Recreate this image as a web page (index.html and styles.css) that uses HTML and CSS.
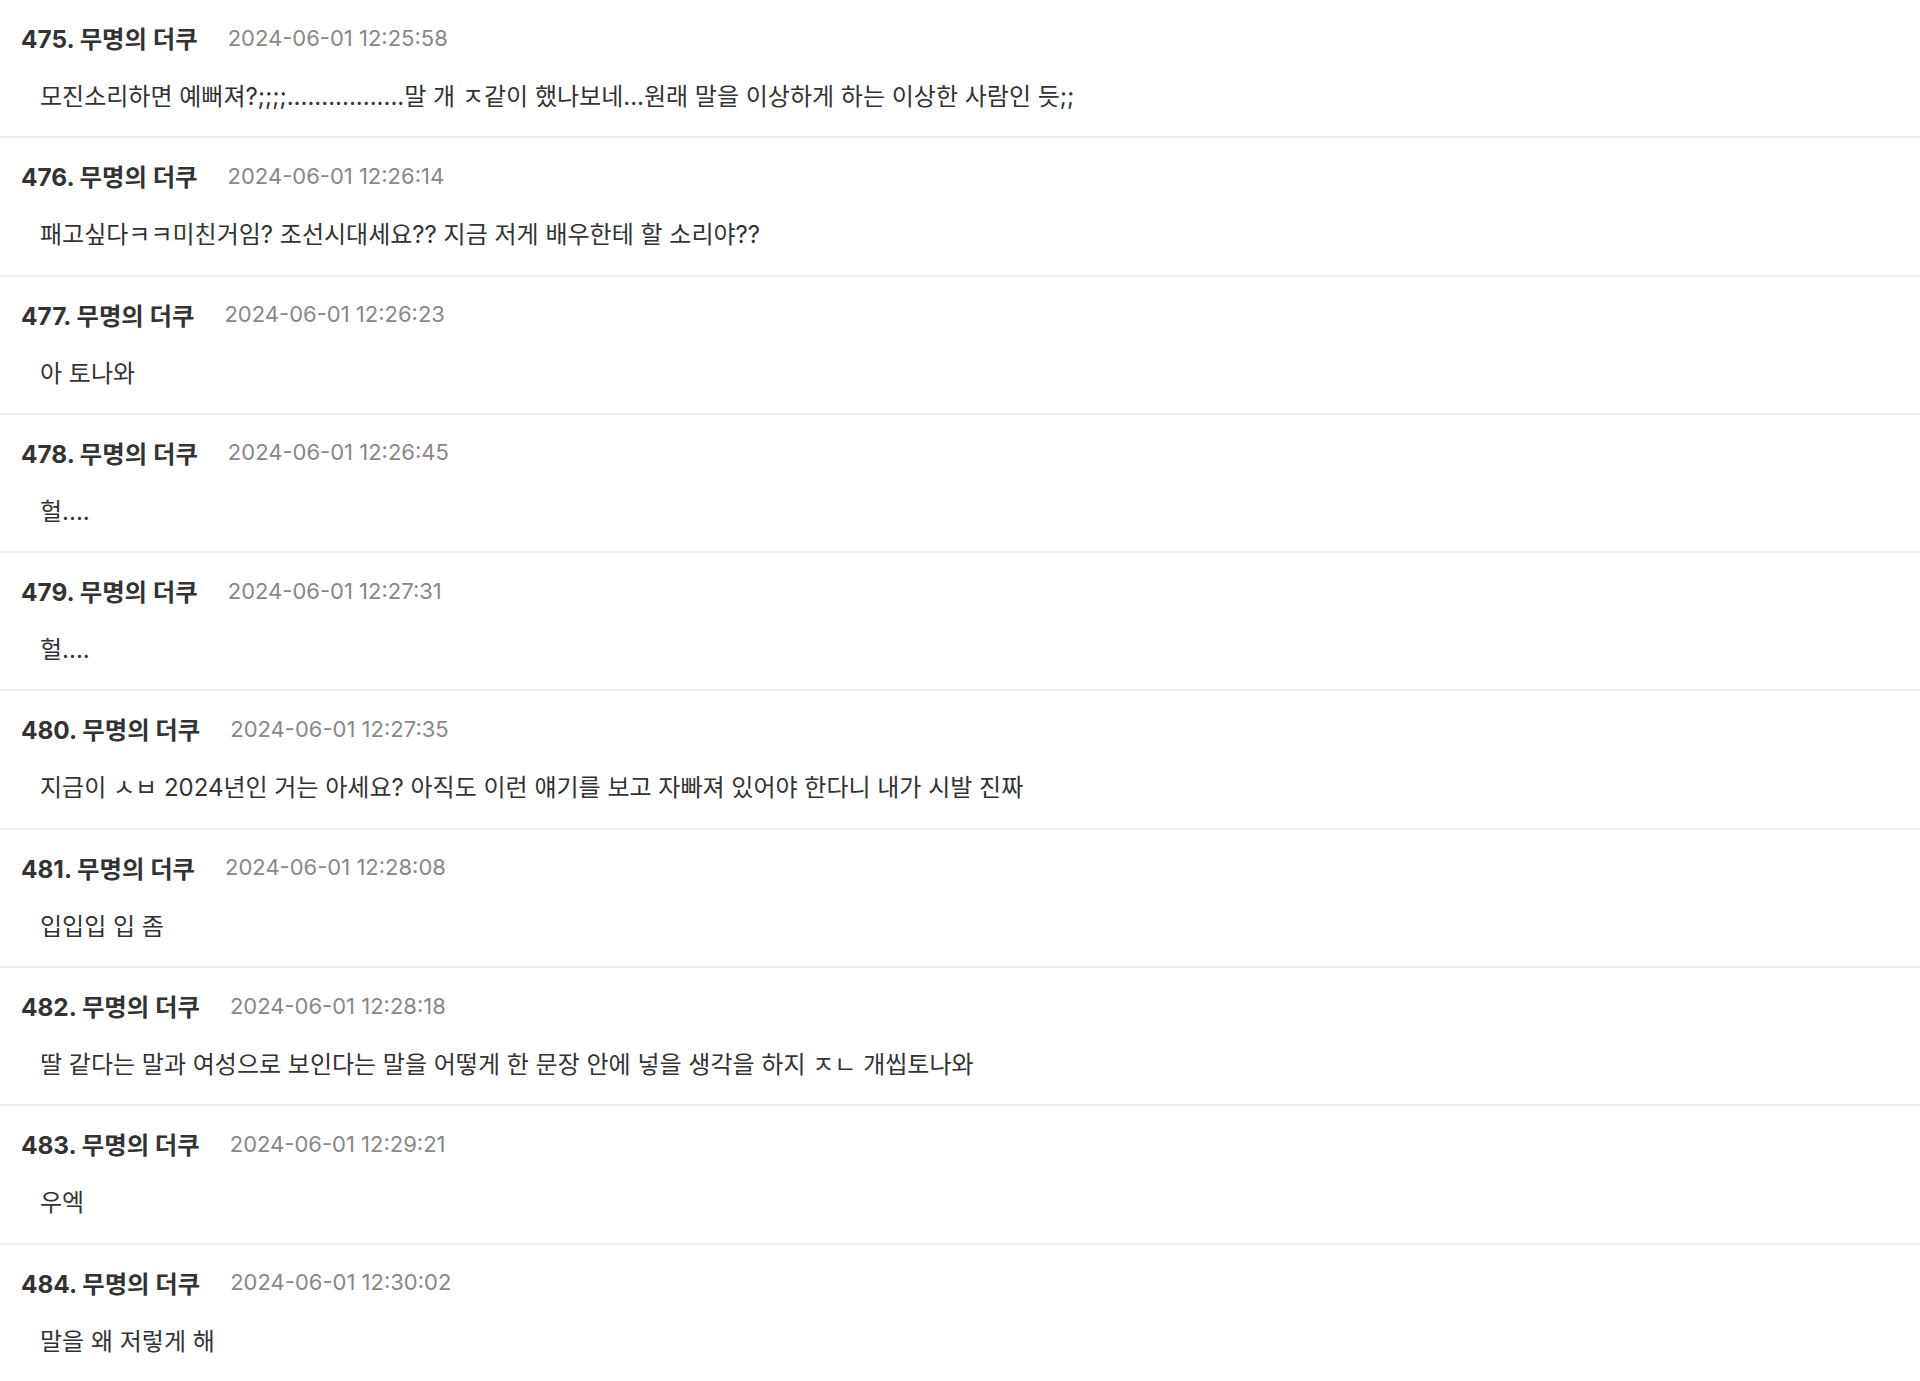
FILE: index.html
```html
<!DOCTYPE html>
<html lang="ko">
<head>
<meta charset="utf-8">
<link rel="stylesheet" href="styles.css">
</head>
<body>
<div class="list">
  <div class="row">
    <div class="head"><span class="name">475. 무명의 더쿠</span><span class="time">2024-06-01 12:25:58</span></div>
    <div class="body">모진소리하면 예뻐져?;;;;.................말 개 ㅈ같이 했나보네...원래 말을 이상하게 하는 이상한 사람인 듯;;</div>
  </div>
  <div class="row">
    <div class="head"><span class="name">476. 무명의 더쿠</span><span class="time">2024-06-01 12:26:14</span></div>
    <div class="body">패고싶다ㅋㅋ미친거임? 조선시대세요?? 지금 저게 배우한테 할 소리야??</div>
  </div>
  <div class="row">
    <div class="head"><span class="name">477. 무명의 더쿠</span><span class="time">2024-06-01 12:26:23</span></div>
    <div class="body">아 토나와</div>
  </div>
  <div class="row">
    <div class="head"><span class="name">478. 무명의 더쿠</span><span class="time">2024-06-01 12:26:45</span></div>
    <div class="body">헐....</div>
  </div>
  <div class="row">
    <div class="head"><span class="name">479. 무명의 더쿠</span><span class="time">2024-06-01 12:27:31</span></div>
    <div class="body">헐....</div>
  </div>
  <div class="row">
    <div class="head"><span class="name">480. 무명의 더쿠</span><span class="time">2024-06-01 12:27:35</span></div>
    <div class="body">지금이 ㅅㅂ 2024년인 거는 아세요? 아직도 이런 얘기를 보고 자빠져 있어야 한다니 내가 시발 진짜</div>
  </div>
  <div class="row">
    <div class="head"><span class="name">481. 무명의 더쿠</span><span class="time">2024-06-01 12:28:08</span></div>
    <div class="body">입입입 입 좀</div>
  </div>
  <div class="row">
    <div class="head"><span class="name">482. 무명의 더쿠</span><span class="time">2024-06-01 12:28:18</span></div>
    <div class="body">딸 같다는 말과 여성으로 보인다는 말을 어떻게 한 문장 안에 넣을 생각을 하지 ㅈㄴ 개씹토나와</div>
  </div>
  <div class="row">
    <div class="head"><span class="name">483. 무명의 더쿠</span><span class="time">2024-06-01 12:29:21</span></div>
    <div class="body">우엑</div>
  </div>
  <div class="row">
    <div class="head"><span class="name">484. 무명의 더쿠</span><span class="time">2024-06-01 12:30:02</span></div>
    <div class="body">말을 왜 저렇게 해</div>
  </div>
</div>
</body>
</html>
```

FILE: styles.css
```css
html, body {
  margin: 0;
  padding: 0;
  background: #ffffff;
}
body {
  font-family: Inter, "Noto Sans CJK KR", sans-serif;
  color: #333333;
}
.list {
  display: flex;
  flex-direction: column;
}
.row {
  display: flex;
  flex-direction: column;
  gap: 31.5px;
  padding: 23.5px 0 25.3px 0;
  border-bottom: 2px solid #eeeeee;
}
.head {
  display: flex;
  align-items: center;
  gap: 30px;
  height: 28px;
  padding-left: 21px;
}
.name {
  font-size: 24.4px;
  font-weight: 700;
  color: #333333;
}
.time {
  font-size: 22px;
  color: #888888;
}
.body {
  height: 28px;
  line-height: 28px;
  font-size: 24px;
  padding-left: 40px;
  color: #333333;
}
```
